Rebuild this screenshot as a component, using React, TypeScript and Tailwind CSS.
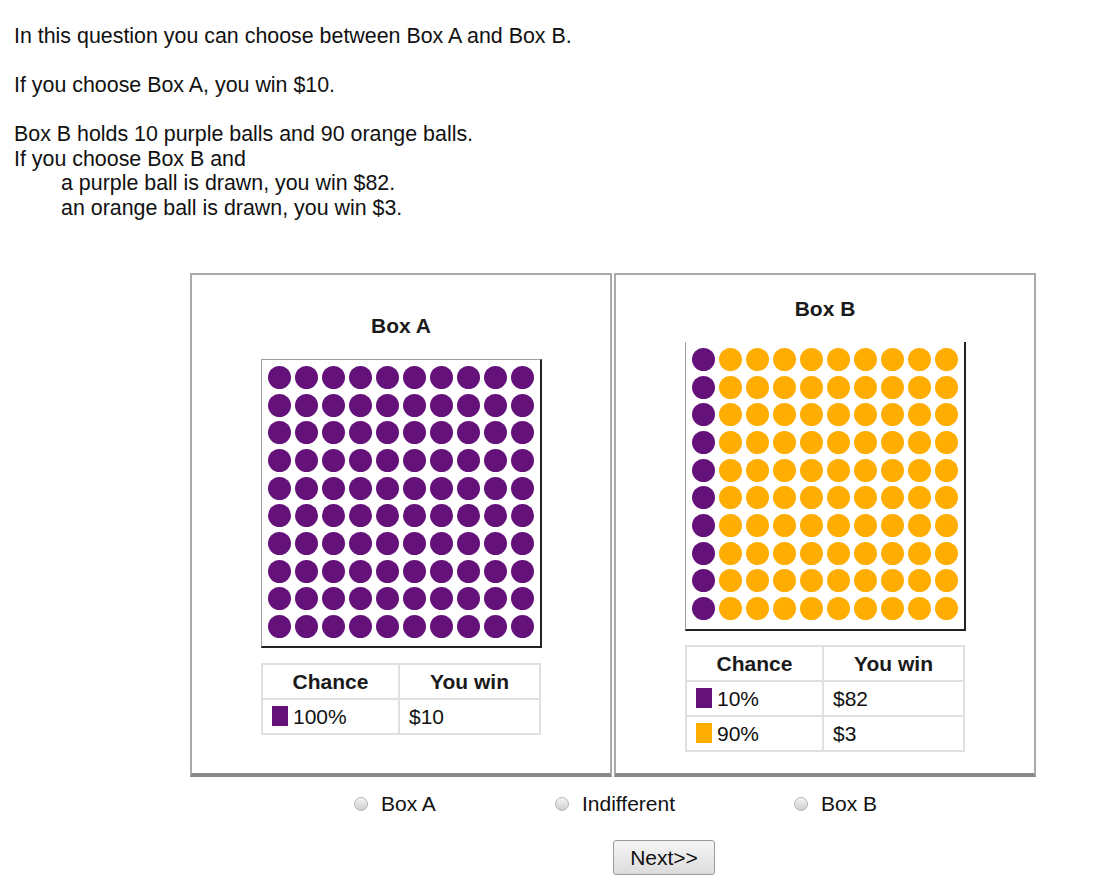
import React from "react";

const PURPLE = "bg-[#64127a]";
const ORANGE = "bg-[#ffad01]";

// 10x10 grid of balls, `purpleCols` leftmost columns are purple
const BallGrid = ({ purpleCols, noTop }: { purpleCols: number; noTop?: boolean }) => (
  <div
    className={`w-[281px] h-[289px] bg-white border-l border-l-[#a0a0a0] border-r-2 border-r-[#222] border-b-2 border-b-[#222] ${
      noTop ? "" : "border-t border-t-[#a0a0a0]"
    } pl-[4px] pt-[4px]`}
  >
    <div className="grid grid-cols-[repeat(10,27px)] grid-rows-[repeat(10,27.7px)]">
      {Array.from({ length: 100 }).map((_, i) => (
        <div key={i} className="flex items-center justify-center">
          <div className={`w-[23px] h-[23px] rounded-full ${i % 10 < purpleCols ? PURPLE : ORANGE}`} />
        </div>
      ))}
    </div>
  </div>
);

interface Row {
  color: string;
  chance: string;
  win: string;
}

const OddsTable = ({ rows }: { rows: Row[] }) => (
  <table className="w-[280px] border-collapse text-[21px] leading-none text-[#111]">
    <thead>
      <tr className="h-[35px]">
        <th className="w-[137px] border-2 border-[#e0e0e0] font-bold text-center text-[#1a1a1a]">Chance</th>
        <th className="border-2 border-[#e0e0e0] font-bold text-center text-[#1a1a1a]">You win</th>
      </tr>
    </thead>
    <tbody>
      {rows.map((r, i) => (
        <tr key={i} className="h-[35px]">
          <td className="border-2 border-[#e0e0e0] pl-[9px]">
            <div className="flex items-center">
              <span className={`inline-block w-[16px] h-[20px] mr-[5px] ${r.color}`} />
              <span>{r.chance}</span>
            </div>
          </td>
          <td className="border-2 border-[#e0e0e0] pl-[9px]">{r.win}</td>
        </tr>
      ))}
    </tbody>
  </table>
);

const Panel = ({ title, children }: { title: string; children: React.ReactNode }) => (
  <div className="w-[422px] h-[504px] border-2 border-[#aaa] border-b-4 border-b-[#888] bg-white flex flex-col items-center justify-center">
    <div className="text-[21px] leading-[24px] font-bold text-[#1a1a1a] mb-[21px]">{title}</div>
    {children}
  </div>
);

const Radio = ({ label }: { label: string }) => (
  <div className="flex items-center">
    <span className="w-[14px] h-[14px] rounded-full border border-[#b5b5b5] bg-gradient-to-b from-[#f4f4f4] to-[#cfcfcf] mr-[13px]" />
    <span>{label}</span>
  </div>
);

export default function App() {
  return (
    <div className="min-h-screen bg-white text-[#111] text-[21px] leading-[24.5px] font-['Liberation_Sans',Arial,sans-serif] pt-[24px] pl-[14px]">
      {/* Question text */}
      <div className="text-[21.4px]">
        <div>In this question you can choose between Box A and Box B.</div>
        <br />
        <div>If you choose Box A, you win $10.</div>
        <br />
        <div>Box B holds 10 purple balls and 90 orange balls.</div>
        <div>If you choose Box B and</div>
        <div className="pl-[47px]">a purple ball is drawn, you win $82.</div>
        <div className="pl-[47px]">an orange ball is drawn, you win $3.</div>
      </div>

      {/* Boxes */}
      <div className="flex gap-[2px] ml-[176px] mt-[53px]">
        <Panel title="Box A">
          <BallGrid purpleCols={10} />
          <div className="mt-[15px]">
            <OddsTable rows={[{ color: PURPLE, chance: "100%", win: "$10" }]} />
          </div>
        </Panel>
        <Panel title="Box B">
          <BallGrid purpleCols={1} noTop />
          <div className="mt-[14px]">
            <OddsTable
              rows={[
                { color: PURPLE, chance: "10%", win: "$82" },
                { color: ORANGE, chance: "90%", win: "$3" },
              ]}
            />
          </div>
        </Panel>
      </div>

      {/* Choice */}
      <div className="flex ml-[340px] mt-[15px] h-[24px]">
        <div className="w-[201px]">
          <Radio label="Box A" />
        </div>
        <div className="w-[239px]">
          <Radio label="Indifferent" />
        </div>
        <div>
          <Radio label="Box B" />
        </div>
      </div>

      <div className="ml-[599px] mt-[24px]">
        <button className="w-[102px] h-[35px] rounded-[3px] border border-[#9a9a9a] bg-gradient-to-b from-[#f6f6f6] to-[#dcdcdc] text-[21px] leading-none text-[#111]">
          Next&gt;&gt;
        </button>
      </div>
    </div>
  );
}
